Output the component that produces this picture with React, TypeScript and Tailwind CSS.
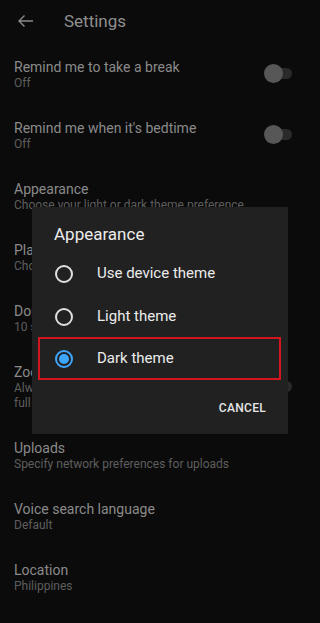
import React from 'react';

// Settings rows behind the dimmed dialog
const rows: { title: string; sub: string[]; toggle?: boolean }[] = [
  { title: 'Remind me to take a break', sub: ['Off'], toggle: true },
  { title: "Remind me when it's bedtime", sub: ['Off'], toggle: true },
  { title: 'Appearance', sub: ['Choose your light or dark theme preference'] },
  { title: 'Playback in feeds', sub: ['Choose whether videos play as you browse'] },
  { title: 'Double-tap to seek', sub: ['10 seconds'] },
  { title: 'Zoom to fill screen', sub: ['Always zoom so that videos fill the screen in', 'full screen'], toggle: true },
  { title: 'Uploads', sub: ['Specify network preferences for uploads'] },
  { title: 'Voice search language', sub: ['Default'] },
  { title: 'Location', sub: ['Philippines'] },
];

const options = ['Use device theme', 'Light theme', 'Dark theme'];

const Toggle = () => (
  <div className="relative w-[28px] h-[11px] mr-[28px] mt-[-2px]">
    <div className="absolute left-[9px] right-0 top-0 bottom-0 rounded-full bg-[#2a2a2a]" />
    <div className="absolute left-0 top-[-4px] w-[19px] h-[19px] rounded-full bg-[#575757]" />
  </div>
);

const Radio = ({ on }: { on: boolean }) =>
  on ? (
    <div className="w-[18px] h-[18px] rounded-full border-2 border-[#3ea6ff] flex items-center justify-center">
      <div className="w-[10px] h-[10px] rounded-full bg-[#3ea6ff]" />
    </div>
  ) : (
    <div className="w-[18px] h-[18px] rounded-full border-2 border-[#e0e0e0]" />
  );

export default function App() {
  return (
    <div
      className="relative w-[320px] h-[623px] overflow-hidden bg-[#0b0b0b]"
      style={{ fontFamily: 'Roboto, "Noto Sans", sans-serif' }}
    >
      <div className="h-[44px] flex items-center">
        <svg className="ml-[17px] mt-[-2px]" width="17" height="14" viewBox="0 0 17 14" fill="none">
          <path d="M16 7H2M7.5 1.5L2 7l5.5 5.5" stroke="#8a8a8a" strokeWidth="1.4" />
        </svg>
        <span className="ml-[30px] text-[17px] text-[#8f8f8f]">Settings</span>
      </div>

      {rows.map((r) => (
        <div key={r.title} className="flex items-center justify-between pl-[14px] pt-[14px] pb-[14px]">
          <div>
            <div className="text-[14px] leading-[18px] text-[#8a8a8a]">{r.title}</div>
            {r.sub.map((s) => (
              <div key={s} className="text-[12px] leading-[15px] text-[#5e5e5e] whitespace-nowrap">
                {s}
              </div>
            ))}
          </div>
          {r.toggle && <Toggle />}
        </div>
      ))}

      {/* Appearance dialog */}
      <div className="absolute left-[32px] top-[207px] w-[256px] h-[227px] bg-[#212121] text-[#ececec]">
        <div className="pl-[22px] pt-[17px] text-[17px] leading-[20px]">Appearance</div>
        <div className="mt-[8px] px-[6px]">
          {options.map((o, i) => (
            <div
              key={o}
              className={`flex items-center h-[43px] ${
                i === 2 ? 'border-2 border-[#d3161d] mt-[-1px] pl-[15px] w-[243px]' : 'pl-[17px]'
              }`}
            >
              <Radio on={i === 2} />
              <span className="ml-[24px] text-[15px]">{o}</span>
            </div>
          ))}
        </div>
        <div className="flex justify-end pr-[22px] mt-[19px]">
          <span className="text-[12px] font-medium text-[#e6e6e6] tracking-[0.3px]">CANCEL</span>
        </div>
      </div>
    </div>
  );
}
